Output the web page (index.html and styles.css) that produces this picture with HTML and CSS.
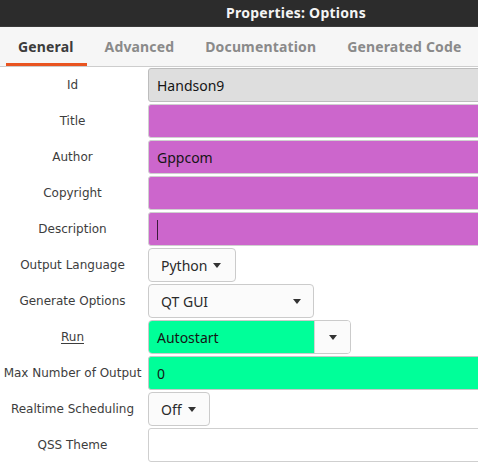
FILE: index.html
```html
<!DOCTYPE html>
<html>
<head>
<meta charset="utf-8">
<link rel="stylesheet" href="styles.css">
</head>
<body>
<div class="window">
  <div class="titlebar"><span class="title">Properties: Options</span></div>
  <div class="tabs">
    <div class="tab active">General</div>
    <div class="tab">Advanced</div>
    <div class="tab">Documentation</div>
    <div class="tab">Generated Code</div>
  </div>
  <div class="form">
    <div class="label">Id</div>
    <div class="field gray">Handson9</div>

    <div class="label">Title</div>
    <div class="field purple"></div>

    <div class="label">Author</div>
    <div class="field purple">Gppcom</div>

    <div class="label">Copyright</div>
    <div class="field purple"></div>

    <div class="label">Description</div>
    <div class="field purple"><span class="cursor"></span></div>

    <div class="label">Output Language</div>
    <div class="cell"><div class="dropdown w-python">Python<span class="arrow"></span></div></div>

    <div class="label">Generate Options</div>
    <div class="cell"><div class="dropdown w-gen spread">QT GUI<span class="arrow"></span></div></div>

    <div class="label"><u>Run</u></div>
    <div class="cell"><div class="combo"><div class="combo-text">Autostart</div><div class="combo-btn"><span class="arrow"></span></div></div></div>

    <div class="label">Max Number of Output</div>
    <div class="field green">0</div>

    <div class="label">Realtime Scheduling</div>
    <div class="cell"><div class="dropdown w-off">Off<span class="arrow"></span></div></div>

    <div class="label">QSS Theme</div>
    <div class="field white"></div>
  </div>
</div>
</body>
</html>
```
FILE: styles.css
```css
html, body {
  margin: 0;
  padding: 0;
  background: #ffffff;
}
.window {
  width: 478px;
  height: 475px;
  overflow: hidden;
  background: #ffffff;
}
.titlebar {
  height: 27px;
  background: #2c2c2c;
  display: flex;
  align-items: center;
  padding-left: 226px;
  box-sizing: border-box;
  border-bottom: 1px solid #3a3a3a;
}
.title {
  font-family: "Noto Sans", "DejaVu Sans", sans-serif;
  font-weight: bold;
  font-size: 14px;
  letter-spacing: 0.25px;
  color: #f4f4f4;
  white-space: nowrap;
  margin-top: -1px;
}
.tabs {
  height: 40px;
  box-sizing: border-box;
  background: #f6f6f6;
  border-bottom: 1px solid #cdcdcd;
  display: flex;
  padding-left: 6px;
}
.tab {
  font-family: "Noto Sans", "DejaVu Sans", sans-serif;
  font-weight: bold;
  font-size: 14px;
  letter-spacing: 0.15px;
  color: #8a8a8a;
  padding: 0 13px 0 12px;
  display: flex;
  align-items: center;
  margin-right: 6px;
  box-sizing: border-box;
  border-bottom: 3px solid transparent;
  padding-top: 3px;
  white-space: nowrap;
}
.tab.active {
  color: #3c3c3c;
  border-bottom-color: #e95420;
}
.form {
  display: grid;
  grid-template-columns: 148px 400px;
  grid-auto-rows: 34px;
  row-gap: 2px;
  margin-top: 1px;
}
.label {
  font-family: "DejaVu Sans", sans-serif;
  font-size: 12px;
  color: #3d3d3d;
  display: flex;
  align-items: center;
  justify-content: center;
  padding-right: 3px;
  white-space: nowrap;
}
.label u {
  text-decoration-thickness: 1px;
  text-underline-offset: 2px;
}
.field {
  box-sizing: border-box;
  border: 1px solid #c4c4c4;
  border-radius: 3px;
  display: flex;
  align-items: center;
  padding-left: 8px;
  font-family: "Noto Sans", "Open Sans", sans-serif;
  font-size: 14px;
  color: #151515;
}
.gray { background: #dedede; border-color: #bdbdbd; }
.purple { background: #cc66cc; border-color: #d0d0d0; }
.green { background: #00ff99; border-color: #c8c8c8; }
.white { background: #ffffff; border-color: #cfcfcf; }
.cursor {
  display: block;
  width: 1px;
  height: 20px;
  background: #3a1a3a;
  margin-top: 1px;
}
.cell {
  display: flex;
  align-items: stretch;
}
.dropdown {
  box-sizing: border-box;
  border: 1px solid #cbcbcb;
  border-radius: 4px;
  background: #fbfbfb;
  display: flex;
  align-items: center;
  padding-left: 12px;
  font-family: "Noto Sans", "Open Sans", sans-serif;
  font-size: 14px;
  color: #2a2a2a;
}
.dropdown .arrow { margin-left: 6px; }
.w-python { width: 88px; }
.w-gen { width: 166px; padding-right: 12px; }
.w-off { width: 62px; }
.spread { justify-content: space-between; }
.arrow {
  display: inline-block;
  width: 0;
  height: 0;
  border-left: 4.5px solid transparent;
  border-right: 4.5px solid transparent;
  border-top: 5px solid #333333;
  margin-top: 1px;
}
.combo {
  width: 203px;
  box-sizing: border-box;
  border: 1px solid #cbcbcb;
  border-radius: 4px;
  display: flex;
  overflow: hidden;
}
.combo-text {
  flex: 1;
  background: #00ff99;
  display: flex;
  align-items: center;
  padding-left: 8px;
  font-family: "Noto Sans", "Open Sans", sans-serif;
  font-size: 14px;
  color: #151515;
}
.combo-btn {
  width: 35px;
  background: #fbfbfb;
  border-left: 1px solid #d4d4d4;
  display: flex;
  align-items: center;
  justify-content: center;
}
```
